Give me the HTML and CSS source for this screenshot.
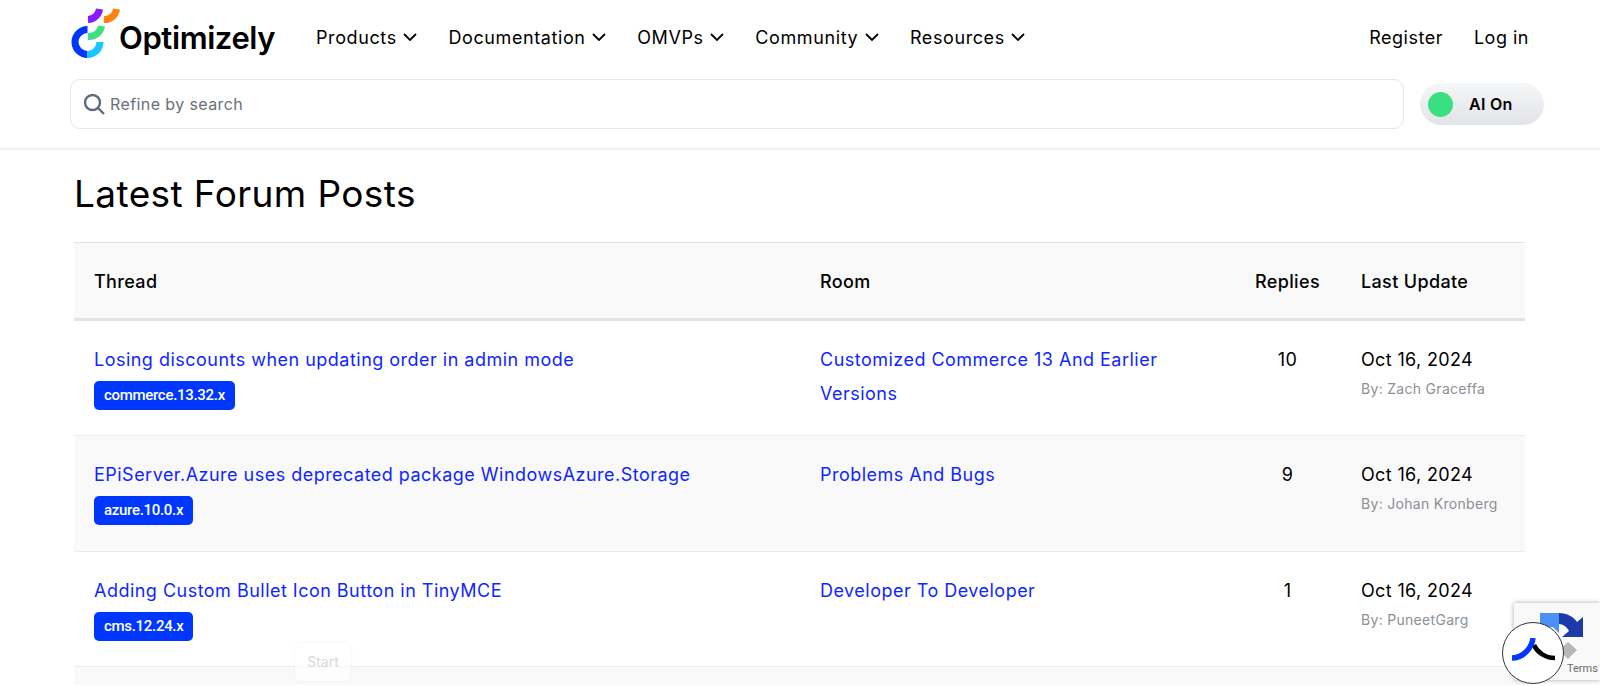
FILE: index.html
```html
<!DOCTYPE html>
<html lang="en">
<head>
    <meta charset="UTF-8">
    <title>Latest Forum Posts</title>
    <link rel="stylesheet" href="styles.css">
</head>
<body>
    <!-- Header -->
    <header class="site-header">
        <div class="navbar">
            <a class="logo" href="#">
                <svg class="logo-mark" width="52" height="60" viewBox="0 0 52 60" fill="none" stroke-width="7">
                    <path d="M17.5 27.5A12.5 12.5 0 0 0 17.5 52.5" stroke="#0037ff"/>
                    <path d="M17.5 52.5A12.5 12.5 0 0 0 30 40" stroke="#17c8ff"/>
                    <path d="M18 34.5A13 12 0 0 0 31.5 24" stroke="#3be081"/>
                    <path d="M18 17.5A12 12 0 0 0 29.5 7" stroke="#861dff"/>
                    <path d="M34 17.5A12 12 0 0 0 46.5 7" stroke="#ff8110"/>
                </svg>
                <span class="logo-text">Optimizely</span>
            </a>
            <nav class="nav-links">
                <a href="#">Products <svg class="chevron" width="14" height="8" viewBox="0 0 14 8"><path d="M1 1l6 6 6-6"/></svg></a>
                <a href="#">Documentation <svg class="chevron" width="14" height="8" viewBox="0 0 14 8"><path d="M1 1l6 6 6-6"/></svg></a>
                <a href="#">OMVPs <svg class="chevron" width="14" height="8" viewBox="0 0 14 8"><path d="M1 1l6 6 6-6"/></svg></a>
                <a href="#">Community <svg class="chevron" width="14" height="8" viewBox="0 0 14 8"><path d="M1 1l6 6 6-6"/></svg></a>
                <a href="#">Resources <svg class="chevron" width="14" height="8" viewBox="0 0 14 8"><path d="M1 1l6 6 6-6"/></svg></a>
            </nav>
            <div class="account-links">
                <a href="#">Register</a>
                <a href="#">Log in</a>
            </div>
        </div>
        <div class="search-row">
            <div class="search-box">
                <svg width="22" height="22" viewBox="0 0 22 22" fill="none" stroke="#5b6b80" stroke-width="2.4">
                    <circle cx="9.5" cy="9.5" r="7.5"/>
                    <path d="M15 15l6 6"/>
                </svg>
                <span>Refine by search</span>
            </div>
            <div class="ai-toggle">
                <span class="ai-dot"></span>
                <span class="ai-label">AI On</span>
            </div>
        </div>
    </header>

    <!-- Forum posts -->
    <main class="content">
        <h1>Latest Forum Posts</h1>
        <div class="forum-table">
            <div class="row head-row">
                <div>Thread</div>
                <div>Room</div>
                <div class="replies">Replies</div>
                <div>Last Update</div>
            </div>
            <div class="row">
                <div>
                    <a href="#">Losing discounts when updating order in admin mode</a>
                    <span class="tag">commerce.13.32.x</span>
                </div>
                <div><a href="#">Customized Commerce 13 And Earlier Versions</a></div>
                <div class="replies">10</div>
                <div>Oct 16, 2024<span class="author">By: Zach Graceffa</span></div>
            </div>
            <div class="row shaded">
                <div>
                    <a href="#">EPiServer.Azure uses deprecated package WindowsAzure.Storage</a>
                    <span class="tag">azure.10.0.x</span>
                </div>
                <div><a href="#">Problems And Bugs</a></div>
                <div class="replies">9</div>
                <div>Oct 16, 2024<span class="author">By: Johan Kronberg</span></div>
            </div>
            <div class="row">
                <div>
                    <a href="#">Adding Custom Bullet Icon Button in TinyMCE</a>
                    <span class="tag">cms.12.24.x</span>
                </div>
                <div><a href="#">Developer To Developer</a></div>
                <div class="replies">1</div>
                <div>Oct 16, 2024<span class="author">By: PuneetGarg</span></div>
            </div>
            <div class="tail-row"></div>
        </div>
    </main>

    <!-- Floating widgets -->
    <div class="start-hint">Start</div>
    <div class="recaptcha">
        <svg width="56" height="56" viewBox="0 0 56 56">
            <path d="M33 31l9 8-9 9-9-9z" fill="#b8b8b8"/>
            <path d="M5 2H24V22L18 16H5z" fill="#4a90f5"/>
            <path d="M24 2C32 2 39 6 42 11l6-5v20H27l7-6C32 16 28 13 24 13z" fill="#1c3aa9"/>
        </svg>
        <span class="recaptcha-terms">Terms</span>
    </div>
    <div class="assistant">
        <svg width="44" height="30" viewBox="0 0 44 30" fill="none">
            <path d="M23 7C26 14 34 20 44 20" stroke="#000" stroke-width="4.5"/>
            <path d="M22 0C21 10 12 20 1 20" stroke="#0037ff" stroke-width="5.5"/>
        </svg>
    </div>
</body>
</html>
```

FILE: styles.css
```css
body {
    font-family: Inter, Arial, sans-serif;
    background-color: #fff;
    color: #000;
    margin: 0;
    position: relative;
}
a {
    color: inherit;
    text-decoration: none;
}

/* Header */
.site-header {
    border-bottom: 2px solid #efefef;
    height: 148px;
}
.navbar {
    display: flex;
    align-items: center;
    height: 74px;
    padding: 0 71px 0 70px;
}
.logo {
    display: flex;
    align-items: center;
    width: 246px;
}
.logo-mark {
    margin-bottom: 11px;
}
.logo-text {
    font-size: 31px;
    font-weight: 600;
    letter-spacing: -0.4px;
    margin-left: -3px;
}
.nav-links {
    display: flex;
    gap: 31px;
    font-size: 18px;
    letter-spacing: 0.6px;
    flex: 1;
}
.chevron {
    fill: none;
    stroke: #000;
    stroke-width: 1.8;
    margin-left: 1px;
    vertical-align: 3px;
}
.account-links {
    display: flex;
    gap: 31px;
    font-size: 18px;
    letter-spacing: 0.5px;
}
.search-row {
    display: flex;
    align-items: center;
    gap: 16px;
    padding: 5px 56px 0 70px;
}
.search-box {
    flex: 1;
    height: 48px;
    border: 1px solid #e6e6e6;
    border-radius: 10px;
    display: flex;
    align-items: center;
    gap: 5px;
    padding-left: 12px;
    color: #68707a;
    font-size: 16px;
    letter-spacing: 0.4px;
}
.ai-toggle {
    width: 124px;
    height: 42px;
    border-radius: 21px;
    background: linear-gradient(#f6f7f8, #e1e3e7);
    display: flex;
    align-items: center;
    padding-left: 8px;
    box-sizing: border-box;
}
.ai-dot {
    width: 25px;
    height: 25px;
    border-radius: 50%;
    background: #39df80;
}
.ai-label {
    margin-left: 16px;
    font-size: 16px;
    font-weight: 600;
    letter-spacing: 0.3px;
}

/* Forum posts */
.content {
    padding: 0 75px 0 74px;
}
h1 {
    font-size: 37px;
    font-weight: 400;
    letter-spacing: 0.4px;
    line-height: 46px;
    margin: 21px 0 25px 0;
}
.forum-table {
    border-top: 1px solid #e1e3e6;
}
.row {
    display: grid;
    grid-template-columns: 726px 394px 147px 1fr;
    height: 115px;
    box-sizing: border-box;
    padding: 22px 20px 0 20px;
    border-bottom: 1px solid #ececec;
    font-size: 18px;
    letter-spacing: 0.35px;
    line-height: 34px;
}
.row > div {
    padding-right: 20px;
}
.row a {
    color: #0f26ff;
    letter-spacing: 0.48px;
}
.head-row {
    height: 78px;
    background-color: #f9f9fa;
    border-bottom: 3px solid #e1e3e6;
    font-weight: 500;
    padding-top: 22px;
}
.shaded {
    height: 116px;
}
.shaded,
.tail-row {
    background-color: #f9f9f9;
}
.tail-row {
    height: 18px;
}
.row .replies {
    text-align: center;
    padding-right: 0;
}
.tag {
    display: table;
    background-color: #0037ff;
    color: #fff;
    font-family: Roboto, Arial, sans-serif;
    font-size: 15px;
    font-weight: 500;
    letter-spacing: -0.3px;
    line-height: 29px;
    padding: 0 10px;
    border-radius: 5px;
    margin-top: 4px;
}
.author {
    display: block;
    color: #8b8f96;
    font-size: 14px;
    letter-spacing: 0.3px;
    line-height: 24px;
    white-space: nowrap;
}

/* Floating widgets */
.start-hint {
    position: absolute;
    left: 295px;
    top: 643px;
    width: 56px;
    height: 38px;
    border-radius: 6px;
    background: rgba(255, 255, 255, 0.6);
    box-shadow: 0 0 3px rgba(0, 0, 0, 0.06);
    color: #d8d8d8;
    font-size: 14px;
    line-height: 38px;
    text-align: center;
}
.recaptcha {
    position: absolute;
    left: 1514px;
    top: 603px;
    width: 86px;
    height: 77px;
    background: #f9f9f9;
    box-shadow: 0 0 5px rgba(0, 0, 0, 0.35);
    border-radius: 2px 0 0 2px;
}
.recaptcha svg {
    position: absolute;
    left: 21px;
    top: 8px;
}
.recaptcha-terms {
    position: absolute;
    left: 53px;
    top: 59px;
    font-family: Roboto, Arial, sans-serif;
    font-size: 11px;
    color: #6b6b6b;
}
.assistant {
    position: absolute;
    left: 1502px;
    top: 622px;
    width: 62px;
    height: 62px;
    box-sizing: border-box;
    border: 1px solid #333;
    border-radius: 50%;
    background: #fff;
    display: flex;
    align-items: center;
    justify-content: center;
}
```
